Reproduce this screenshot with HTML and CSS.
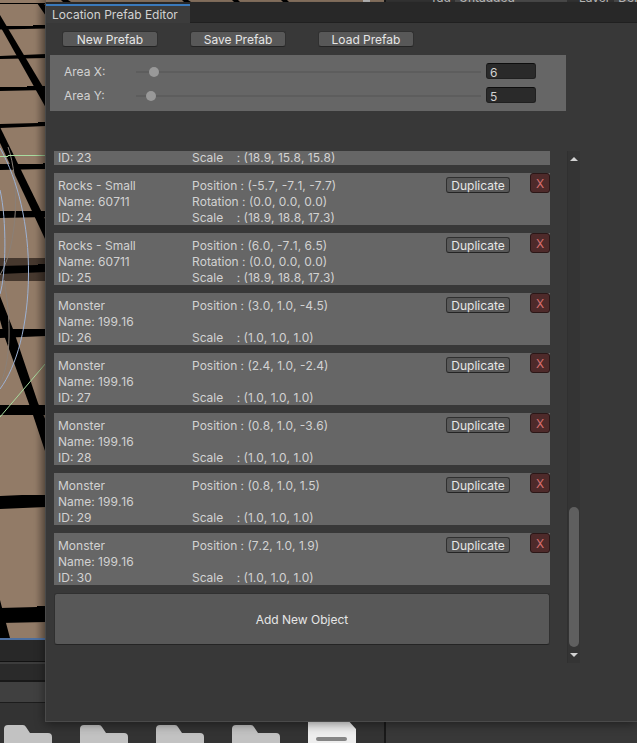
FILE: index.html
```html
<!DOCTYPE html>
<html lang="en">
<head>
<meta charset="utf-8">
<title>Location Prefab Editor</title>
<link rel="stylesheet" href="styles.css">
<script src="objects.js" defer></script>
</head>
<body>
<div class="desktop">
  <div class="backdrop" aria-hidden="true">
    <div class="dock">
      <svg class="scene" width="384" height="638" viewBox="0 0 384 638">
        <defs>
          <linearGradient id="shade" x1="0" x2="1" y1="0" y2="0">
            <stop offset="0" stop-color="#000" stop-opacity="0"/>
            <stop offset="1" stop-color="#000" stop-opacity=".22"/>
          </linearGradient>
        </defs>
        <rect width="384" height="638" fill="#927b67"/>
        <rect y="258" width="46" height="23" fill="#46382e"/>
        <g fill="#000">
          <path d="M0 3H46V4H0zM37 3H43L46 6V16zM61 0H68L71 2H63zM182 0H188L191 2H184zM232 0H238L240 2H234zM281 0H287L289 2H283z"/>
          <path d="M0 26 33 26V25H46V28.500L0 29.500zM0 56 46 54V58L0 59zM0 87 27 87V86H46V90L0 91z"/>
          <path d="M0 15 46 92V108L0 26z"/>
          <path d="M0 124 38 123V122H46V126L0 128zM0 164 43 164V163H46V169L0 170zM0 211H46V217L0 218zM0 266 38 265V264H46V272L0 274z"/>
          <path d="M0 127 46 221V241L0 143z"/>
          <path d="M0 329H46V336L0 338zM0 405H46V415H0zM0 496 22 495H46V507L0 509zM0 608 37 607V606H46V622L0 623z"/>
          <path d="M0 296 13 329 38 403 46 421V454L33 415 5 338 0 320zM0 600 6 623 10 638H0z"/>
        </g>
        <g fill="none" stroke-width="1">
          <path d="M8 147C20 180 18 245 0 275M4 280C13 330 9 365 0 385" stroke="#8a8078"/>
          <path d="M0 148C18 180 29 225 28.500 275C28 325 17 366 0 389M0 190C7 220 6 275 0 294" stroke="#9db2d4"/>
          <path d="M0 156.500H8V155.500H46M0 417 46 363" stroke="#a9dca0"/>
        </g>
        <rect x="363" width="7" height="2" fill="#c4c4c4"/>
        <rect x="35" width="11" height="638" fill="url(#shade)"/>
      </svg>
      <div class="inspector">
        <span>Tag</span><span class="pick">Untagged</span><span>Layer</span><span class="pick">Default</span>
      </div>
    </div>
    <div class="panel-tabs"></div>
    <div class="panel-bar"></div>
    <div class="panel-tools"></div>
    <div class="assets">
      <svg class="asset" viewBox="0 0 48 40"><path d="M0 40V5Q0 1 4 1H19Q21 1 22 3L26 9H44Q48 9 48 13V40z"/></svg>
      <svg class="asset" viewBox="0 0 48 40"><path d="M0 40V5Q0 1 4 1H19Q21 1 22 3L26 9H44Q48 9 48 13V40z"/></svg>
      <svg class="asset" viewBox="0 0 48 40"><path d="M0 40V5Q0 1 4 1H19Q21 1 22 3L26 9H44Q48 9 48 13V40z"/></svg>
      <svg class="asset" viewBox="0 0 48 40"><path d="M0 40V5Q0 1 4 1H19Q21 1 22 3L26 9H44Q48 9 48 13V40z"/></svg>
      <svg class="asset file" viewBox="0 0 48 40"><path d="M0 40V-6H38L48 5V40z"/><rect x="8" y="13" width="31" height="4" rx="2" fill="#858585"/></svg>
      <div class="side"></div>
    </div>
  </div>

  <main class="window">
    <header class="tabs"><h1 class="tab">Location Prefab Editor</h1></header>
    <div class="content">
      <div class="toolbar">
        <button class="btn">New Prefab</button>
        <button class="btn">Save Prefab</button>
        <button class="btn">Load Prefab</button>
      </div>
      <section class="area">
        <div class="area-row">
          <label for="ax">Area X:</label>
          <input class="slider" type="range" min="1" max="130" value="6" aria-label="Area X slider">
          <input class="field" id="ax" type="text" value="6">
        </div>
        <div class="area-row">
          <label for="ay">Area Y:</label>
          <input class="slider" type="range" min="1" max="130" value="5" aria-label="Area Y slider">
          <input class="field" id="ay" type="text" value="5">
        </div>
      </section>
      <section class="objects">
        <div class="list">
          <div id="items" class="items"></div>
          <button class="btn add">Add New Object</button>
        </div>
        <div class="scrollbar">
          <svg width="8" height="4" viewBox="0 0 8 4"><path d="M0 4 4 0 8 4z"/></svg>
          <div class="rail"><div class="thumb"></div></div>
          <svg width="8" height="4" viewBox="0 0 8 4"><path d="M0 0 4 4 8 0z"/></svg>
        </div>
      </section>
    </div>
  </main>
</div>
</body>
</html>
```
FILE: objects.js
```js
const objects = [
  { title: "Rocks - Small", name: "60711", id: 23, position: "", rotation: "", scale: "(18.9, 15.8, 15.8)", cut: true },
  { title: "Rocks - Small", name: "60711", id: 24, position: "(-5.7, -7.1, -7.7)", rotation: "(0.0, 0.0, 0.0)", scale: "(18.9, 18.8, 17.3)" },
  { title: "Rocks - Small", name: "60711", id: 25, position: "(6.0, -7.1, 6.5)", rotation: "(0.0, 0.0, 0.0)", scale: "(18.9, 18.8, 17.3)" },
  { title: "Monster", name: "199.16", id: 26, position: "(3.0, 1.0, -4.5)", scale: "(1.0, 1.0, 1.0)" },
  { title: "Monster", name: "199.16", id: 27, position: "(2.4, 1.0, -2.4)", scale: "(1.0, 1.0, 1.0)" },
  { title: "Monster", name: "199.16", id: 28, position: "(0.8, 1.0, -3.6)", scale: "(1.0, 1.0, 1.0)" },
  { title: "Monster", name: "199.16", id: 29, position: "(0.8, 1.0, 1.5)", scale: "(1.0, 1.0, 1.0)" },
  { title: "Monster", name: "199.16", id: 30, position: "(7.2, 1.0, 1.9)", scale: "(1.0, 1.0, 1.0)" },
];

// The first row is scrolled partly out of view, so only its last line is drawn.
const line = (text) => `<div class="line">${text}</div>`;
document.getElementById("items").innerHTML = objects.map((o) => o.cut
  ? `<article class="item cut"><div>${line("ID: " + o.id)}</div><div>${line("Scale    : " + o.scale)}</div></article>`
  : `<article class="item">
      <div>${line(o.title)}${line("Name: " + o.name)}${line("ID: " + o.id)}</div>
      <div>${line("Position : " + o.position)}${line(o.rotation ? "Rotation : " + o.rotation : "")}${line("Scale    : " + o.scale)}</div>
      <button class="btn duplicate">Duplicate</button>
      <button class="btn remove" aria-label="Remove ${o.id}">X</button>
    </article>`).join("");
```
FILE: styles.css
```css
* { box-sizing: border-box; }

body {
  margin: 0;
  background: #333;
  color: #d2d2d2;
  font: 12px/16px Inter, "Liberation Sans", sans-serif;
}

.desktop {
  position: relative;
  min-height: 100vh;
  overflow: hidden;
}

/* Editor behind the floating window */
.backdrop {
  position: absolute;
  inset: 0;
  display: flex;
  flex-direction: column;
}
.dock { display: flex; border-bottom: 2px solid #4d6f9f; }
.scene { display: block; flex: none; }
.inspector {
  flex: 1;
  display: flex;
  align-items: flex-start;
  height: 16px;
  padding-left: 44px;
  border-left: 2px solid #191919;
  background: #383838;
  overflow: hidden;
}
.inspector span { flex: none; margin-top: -10px; }
.inspector .pick { width: 112px; margin: -10px 12px 0 4px; padding-left: 4px; background: #515151; }
.panel-tabs { height: 22px; background: #282828; border-bottom: 1px solid #111; }
.panel-bar { height: 19px; background: #2a2a2a; border-top: 2px solid #3c3c3c; border-bottom: 1px solid #191919; }
.panel-tools { height: 22px; background: #404040; border-top: 1px solid #191919; border-bottom: 1px solid #1c1c1c; }
.assets {
  flex: 1;
  display: flex;
  gap: 28px;
  padding: 21px 0 0 4px;
  background: #333;
  overflow: hidden;
}
.asset { flex: none; width: 48px; height: 40px; fill: #c2c2c2; overflow: visible; }
.asset.file { fill: #eee; }
.side { flex: 1; margin-top: -21px; border-left: 2px solid #191919; background: #383838; }

/* Floating window */
.window {
  position: relative;
  margin: 2px 0 0 45px;
  border: 1px solid #4a4a4a;
  border-width: 0 0 1px 1px;
  background: #383838;
  box-shadow: 0 2px 10px rgba(0, 0, 0, .45);
}
.tabs {
  display: flex;
  height: 21px;
  padding-top: 2px;
  background: #282828;
  border-bottom: 1px solid #202020;
}
.tab {
  height: 19px;
  margin: 0;
  padding: 1px 12px 0 6px;
  border-top: 2px solid #3a79bb;
  background: #3c3c3c;
  font-size: 12px;
  font-weight: 400;
  line-height: 16px;
}
.content { padding: 8px 57px 58px 4px; }

.btn {
  padding: 0;
  border: 1px solid #303030;
  border-bottom-color: #242424;
  border-radius: 3px;
  background: #585858;
  color: #e6e6e6;
  font: inherit;
  text-align: center;
}
.toolbar { display: flex; gap: 32px; padding-left: 12px; }
.toolbar .btn { width: 96px; height: 16px; line-height: 16px; }

.area {
  display: flex;
  flex-direction: column;
  gap: 8px;
  margin: 8px 14px 40px 0;
  padding: 8px 30px 8px 14px;
  background: #666;
}
.area-row { display: flex; align-items: center; height: 16px; }
.area-row label { width: 72px; padding-top: 2px; }
.slider {
  flex: 1;
  min-width: 0;
  height: 10px;
  margin: 2px 5px 0 0;
  appearance: none;
  background: linear-gradient(#5d5d5d, #5d5d5d) center / 100% 2px no-repeat;
}
.slider::-webkit-slider-thumb {
  appearance: none;
  width: 10px;
  height: 10px;
  border-radius: 50%;
  background: #999;
}
.field {
  width: 50px;
  height: 16px;
  padding: 3px 3px 0;
  border: 1px solid #202020;
  border-top-color: #0d0d0d;
  border-radius: 3px;
  background: #2a2a2a;
  color: #d2d2d2;
  font: inherit;
  line-height: 12px;
}

.objects { display: flex; justify-content: space-between; }
.list { flex: 1; margin: 0 17px 0 4px; }
.items { display: flex; flex-direction: column; gap: 8px; }
.item {
  display: grid;
  grid-template-columns: 134px 254px 64px 1fr;
  align-items: start;
  height: 52px;
  padding: 4px 0 0 4px;
  background: #666;
  overflow: hidden;
}
.item.cut { height: 14px; padding-top: 0; }
.line { height: 16px; line-height: 17px; white-space: pre; font-kerning: none; }
.item.cut .line { height: 14px; line-height: 14px; }
.duplicate { height: 16px; line-height: 16px; }
.item .remove {
  justify-self: end;
  width: 20px;
  height: 20px;
  margin-top: -4px;
  padding-top: 2px;
  border-color: #2b1717;
  background: #4e2a2a;
  color: #d66e6e;
}
.add { display: block; width: 100%; height: 52px; margin-top: 8px; padding-top: 2px; }

.scrollbar {
  display: flex;
  flex-direction: column;
  align-items: center;
  width: 13px;
  height: 512px;
  padding: 6px 0;
  border-left: 1px solid #303030;
  background: #343434;
}
.scrollbar svg { fill: #d2d2d2; }
.rail {
  flex: 1;
  display: flex;
  align-items: flex-end;
  padding: 6px 0;
}
.thumb { width: 10px; height: 140px; border-radius: 5px; background: #5f5f5f; }
```
